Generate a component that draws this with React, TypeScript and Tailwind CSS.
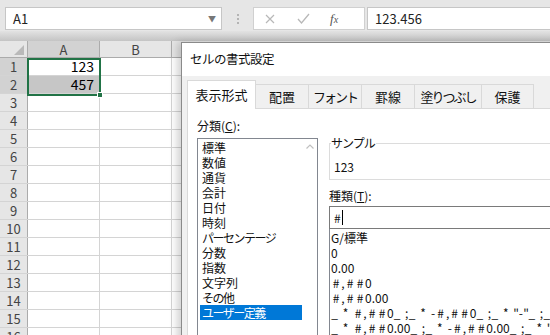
const font = "font-['Noto_Sans_CJK_JP','Noto_Sans',sans-serif]"

const rows = Array.from({ length: 16 }, (_, i) => i + 1)

// kana-heavy labels get tighter tracking, like the proportional kana of the UI font
const categories = [
  { label: "標準" },
  { label: "数値" },
  { label: "通貨" },
  { label: "会計" },
  { label: "日付" },
  { label: "時刻" },
  { label: "パーセンテージ", tight: true },
  { label: "分数" },
  { label: "指数" },
  { label: "文字列" },
  { label: "その他", tight: true },
  { label: "ユーザー定義", tight: true },
]

const formats = [
  "G/標準",
  "0",
  "0.00",
  "#,##0",
  "#,##0.00",
  '_ * #,##0_ ;_ * -#,##0_ ;_ * "-"_ ;_ @_ ',
  '_ * #,##0.00_ ;_ * -#,##0.00_ ;_ * "-"??_ ;_ @_ ',
  "#,##0;-#,##0",
]

// widths of the wide ASCII glyphs in the dialog's format list
const glyphW: Record<string, string> = {
  "#": "w-[10px]",
  "*": "w-[7px]",
  _: "w-[7px]",
  " ": "w-[4px]",
  ",": "w-[4px]",
  ";": "w-[4px]",
  "-": "w-[5px]",
  '"': "w-[5px]",
}

function FormatText({ text }: { text: string }) {
  return (
    <>
      {text.split("").map((ch, i) =>
        glyphW[ch] ? (
          <span key={i} className={`inline-block text-center ${glyphW[ch]}`}>
            {ch === " " ? "\u00a0" : ch}
          </span>
        ) : (
          <span key={i}>{ch}</span>
        ),
      )}
    </>
  )
}

const tabs = [
  { label: "表示形式", w: "w-[69px]", active: true },
  { label: "配置", w: "w-[53px]" },
  { label: "フォント", w: "w-[53px]", tight: true },
  { label: "罫線", w: "w-[53px]" },
  { label: "塗りつぶし", w: "w-[67px]", tight: true },
  { label: "保護", w: "w-[52px]" },
]

function FormulaBar() {
  return (
    <div className="bg-[#e6e6e6]">
      <div className="flex h-[31px] items-start pt-[7px]">
        <div className="ml-[5px] flex h-[23px] w-[217px] items-center justify-between border border-[#c6c6c6] bg-white pl-[7px] pr-[5px] text-[13px] text-[#222]">
          <span>A1</span>
          <span className="text-[8px] text-[#777]">▼</span>
        </div>
        <div className="ml-[14px] flex h-[23px] w-[3px] flex-col items-center justify-center gap-[2px]">
          <span className="h-[2px] w-[2px] bg-[#b4b4b4]" />
          <span className="h-[2px] w-[2px] bg-[#b4b4b4]" />
          <span className="h-[2px] w-[2px] bg-[#b4b4b4]" />
        </div>
        <div className="ml-[14px] flex h-[23px] w-[112px] items-center border border-[#d0d0d0] bg-white">
          <svg className="ml-[11px]" width="10" height="10" viewBox="0 0 10 10">
            <path d="M1 1 L9 9 M9 1 L1 9" stroke="#b8b8b8" strokeWidth="1.2" />
          </svg>
          <svg className="ml-[22px]" width="13" height="11" viewBox="0 0 13 11">
            <path d="M1 6 L4.5 10 L12 1" stroke="#b8b8b8" strokeWidth="1.3" fill="none" />
          </svg>
          <span className="ml-[20px] font-['Liberation_Serif',serif] text-[13px] italic text-[#555]">
            f<span className="text-[10px]">x</span>
          </span>
        </div>
        <div className="ml-[2px] flex h-[23px] flex-1 items-center border border-r-0 border-[#c6c6c6] bg-white pl-[7px] text-[13px] text-[#222]">
          123.456
        </div>
      </div>
      <div className="h-[10px] bg-gradient-to-b from-[#e2e2e2] to-[#c4c4c4]" />
    </div>
  )
}

function Sheet() {
  return (
    <div className="relative text-[#444]">
      <div className="flex h-[17px] border-b border-[#ababab] bg-[#e6e6e6] text-[13px] leading-[17px]">
        <div className="relative w-[28px] border-r border-[#ababab]">
          <div className="absolute bottom-[2px] right-[3px] h-0 w-0 border-b-[10px] border-l-[10px] border-b-[#b9b9b9] border-l-transparent" />
        </div>
        <div className="w-[72px] border-r border-[#ababab] bg-[#d2d2d2] text-center">A</div>
        <div className="w-[72px] border-r border-[#ababab] text-center">B</div>
        <div className="flex-1" />
      </div>
      {rows.map((r) => (
        <div key={r} className="flex h-[18px] border-b border-[#d4d4d4] text-[13px] leading-[17px]">
          <div
            className={`w-[28px] border-r border-[#ababab] text-center ${r <= 2 ? "bg-[#d2d2d2]" : "bg-[#e6e6e6]"}`}
          >
            {r}
          </div>
          <div
            className={`w-[72px] border-r border-[#d4d4d4] pr-[5px] text-right text-[14px] text-black ${r === 2 ? "bg-[#c6c6c6]" : ""}`}
          >
            {r === 1 ? "123" : r === 2 ? "457" : ""}
          </div>
          <div className="w-[72px] border-r border-[#d4d4d4]" />
          <div className="flex-1" />
        </div>
      ))}
      {/* selection A1:A2 */}
      <div className="absolute left-[27px] top-[17px] h-[38px] w-[74px] border-2 border-[#217346]" />
      <div className="absolute left-[97px] top-[51px] h-[6px] w-[6px] border border-white bg-[#217346]" />
    </div>
  )
}

function Dialog() {
  return (
    <div className="absolute left-[181px] top-[42px] h-[310px] w-[390px] border border-[#8a8a8a] bg-[#f0f0f0] shadow-[-4px_0_8px_rgba(0,0,0,0.18)]">
      <div className="flex h-[33px] items-center bg-white pl-[8px] text-[12.5px] tracking-[-0.5px] text-[#111]">
        セルの書式設定
      </div>
      <div className="flex h-[32px] items-end pl-[5px] text-[13px] text-[#111]">
        {tabs.map((t) =>
          t.active ? (
            <div
              key={t.label}
              className={`${t.w} -mb-px flex h-[29px] items-center justify-center border border-b-0 border-[#d9d9d9] bg-white`}
            >
              {t.label}
            </div>
          ) : (
            <div
              key={t.label}
              className={`${t.w} flex h-[24px] items-center justify-center border border-l-0 border-b-0 border-[#d9d9d9] ${t.tight ? "tracking-[-2px]" : ""}`}
            >
              {t.label}
            </div>
          ),
        )}
      </div>
      <div className="ml-[5px] flex h-[240px] gap-[11px] border border-[#d9d9d9] bg-white pl-[9px] pt-[8px] text-[12px] text-[#111]">
        <div className="w-[121px] shrink-0">
          <div className="h-[18px] leading-[18px]">
            分類(<span className="underline">C</span>):
          </div>
          <div className="mt-[3px] flex h-[210px] border border-[#828790] bg-white">
            <div className="flex flex-1 flex-col pl-[2px] pt-px">
              {categories.map((c) => (
                <div
                  key={c.label}
                  className={`h-[15px] pl-[2px] leading-[15px] ${c.tight ? "tracking-[-1.5px]" : ""} ${c.label === "ユーザー定義" ? "bg-[#0078d7] text-white" : ""}`}
                >
                  {c.label}
                </div>
              ))}
            </div>
            <div className="flex w-[15px] justify-center pt-[5px]">
              <svg width="8" height="5" viewBox="0 0 8 5">
                <path d="M0.5 4.5 L4 1 L7.5 4.5" stroke="#c0c0c0" strokeWidth="1.2" fill="none" />
              </svg>
            </div>
          </div>
        </div>
        <div className="min-w-0 flex-1">
          <div className="relative mt-[26px] h-[37px] border border-[#dcdcdc]">
            <span className="absolute -top-[10px] left-[1px] bg-white pr-[1px] leading-[18px] tracking-[-1px]">サンプル</span>
            <div className="pl-[4px] pt-[14px] leading-[18px]">123</div>
          </div>
          <div className="mt-[6px] h-[20px] leading-[20px]">
            種類(<span className="underline">T</span>):
          </div>
          <div className="flex h-[23px] items-center border border-[#7a7a7a] pl-[4px]">
            #<span className="ml-px h-[15px] w-px bg-black" />
          </div>
          <div className="h-[120px] overflow-hidden whitespace-nowrap border border-t-0 border-[#828790] pl-[1px] pt-[1px]">
            {formats.map((f) => (
              <div key={f} className="h-[15px] leading-[15px]">
                <FormatText text={f} />
              </div>
            ))}
          </div>
        </div>
      </div>
    </div>
  )
}

export default function App() {
  return (
    <div className={`relative h-[335px] w-[550px] overflow-hidden bg-white ${font}`}>
      <FormulaBar />
      <Sheet />
      <Dialog />
    </div>
  )
}
